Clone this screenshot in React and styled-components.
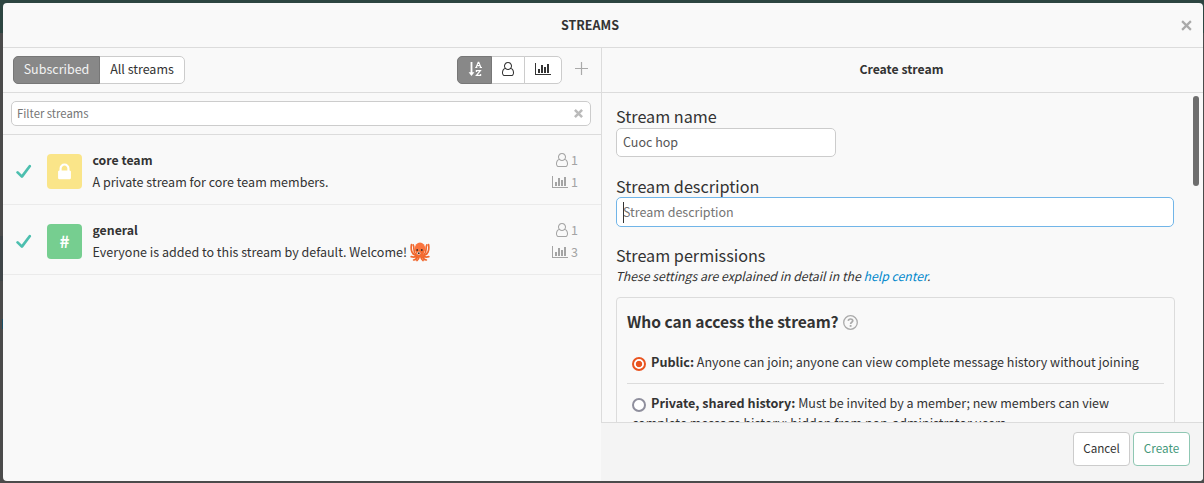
import React from 'react';
import styled, { createGlobalStyle } from 'styled-components';

const Global = createGlobalStyle`
  *, *::before, *::after { box-sizing: border-box; }
  html, body { margin: 0; height: 483px; overflow: hidden; }
  body {
    background:
      linear-gradient(#1c4f66, #1c4f66) 2px 319px / 1px 10px no-repeat,
      linear-gradient(#404649, #404649) 0 236px / 3px 45px no-repeat,
      linear-gradient(#2d4541 0 33px, #4b4b4b 33px);
    font-family: "Noto Sans CJK SC", "Open Sans", sans-serif;
    font-size: 12.53px;
    color: #333;
  }
  b { font-size: 12.6px; }
  input, button { font-family: inherit; }
  svg { display: block; flex: none; }
`;

const Modal = styled.div`
  margin: 3px 1px 2px 3px;
  height: 478px;
  background: #f9f9f9;
  border-radius: 4px;
  overflow: hidden;
  display: flex;
  flex-direction: column;
`;
const Header = styled.header`
  display: grid;
  grid-template-columns: 60px 1fr 60px;
  align-items: center;
  height: 45px;
  flex: none;
  border-bottom: 1px solid #dcdcdc;
`;
const Title = styled.h1`
  grid-column: 2;
  margin: 0;
  padding-right: 26px;
  text-align: center;
  font-size: 12.5px;
  line-height: 20px;
  font-weight: 700;
`;
const Close = styled.button`
  justify-self: end;
  margin-right: 11px;
  padding: 0;
  border: 0;
  background: none;
  color: #aaa;
`;
const Body = styled.div`
  display: flex;
  flex: 1;
  min-height: 0;
`;
const Left = styled.section`
  width: 599px;
  flex: none;
  border-right: 1px solid #dcdcdc;
`;
const Right = styled.section`
  flex: 1;
  min-width: 0;
  display: flex;
  flex-direction: column;
`;
const Toolbar = styled.div`
  display: flex;
  align-items: center;
  height: 45px;
  padding: 0 13px 1px 10px;
  border-bottom: 1px solid #dcdcdc;
`;
const Segments = styled.div`
  display: flex;
  height: 28px;
  margin-left: ${(p) => (p.$end ? 'auto' : 0)};
`;
const Segment = styled.button`
  width: ${(p) => p.$w}px;
  padding: 0 0 2px 0;
  display: flex;
  align-items: center;
  justify-content: center;
  font-size: 12.5px;
  line-height: 18px;
  color: ${(p) => (p.$on ? '#f2f2f2' : '#333')};
  background: ${(p) => (p.$on ? '#888' : '#fff')};
  border: 1px solid ${(p) => (p.$on ? '#777' : '#ccc')};
  & + & { border-left: 1px solid #ccc; margin-left: -1px; }
  &:first-child { border-radius: 5px 0 0 5px; position: relative; }
  &:last-child { border-radius: 0 5px 5px 0; }
`;
const Plus = styled.button`
  margin-left: 13px;
  padding: 0 0 2px;
  border: 0;
  background: none;
  color: #aaa;
`;
const Search = styled.div`
  height: 42px;
  padding: 8px 10px 8px 8px;
  border-bottom: 1px solid #dcdcdc;
`;
const SearchBox = styled.label`
  display: flex;
  align-items: center;
  height: 25px;
  padding: 0 7px 0 5px;
  border: 1px solid #ccc;
  border-radius: 5px;
  background: #fff;
  color: #bbb;
`;
const SearchInput = styled.input`
  flex: 1;
  padding: 0 0 2px;
  border: 0;
  outline: 0;
  height: 20px;
  font-size: 11.3px;
  &::placeholder { color: #757575; opacity: 1; }
`;
const Row = styled.div`
  display: flex;
  align-items: flex-start;
  height: 70px;
  padding: 0 23px 0 13px;
  border-bottom: 1px solid #ebebeb;
`;
const Check = styled.span`
  padding-top: 29px;
  width: 31px;
`;
const Badge = styled.span`
  display: flex;
  align-items: center;
  justify-content: center;
  width: 35px;
  height: 35px;
  margin-top: 19px;
  border-radius: 4px;
  background: ${(p) => p.$color};
  color: #fff;
  font-size: 17px;
  line-height: 33px;
  font-weight: 700;
`;
const Hash = styled.span`
  height: 35px;
`;
const Info = styled.div`
  padding: 14px 0 0 10.5px;
  flex: 1;
`;
const Name = styled.div`
  font-size: 12.3px;
  font-weight: 700;
  line-height: 22px;
  height: 22px;
`;
const Desc = styled.div`
  display: flex;
  align-items: center;
  gap: 3px;
  line-height: 22px;
  height: 22px;
`;
const Stats = styled.div`
  padding-top: 14px;
`;
const Stat = styled.div`
  display: flex;
  align-items: center;
  justify-content: flex-end;
  gap: ${(p) => p.$gap}px;
  height: 22px;
  line-height: 22px;
  color: #a4a4a4;
`;
const PanelTitle = styled.h2`
  margin: 0;
  height: 45px;
  flex: none;
  padding-right: 2px;
  line-height: 43px;
  font-size: 12.25px;
  font-weight: 700;
  text-align: center;
  border-bottom: 1px solid #dcdcdc;
`;
const Scroller = styled.div`
  display: flex;
  justify-content: space-between;
  flex: 1;
  min-height: 0;
  overflow: hidden;
  padding: 0 4px 0 14px;
`;
const Thumb = styled.div`
  width: 6px;
  height: 90px;
  margin-top: 3px;
  border-radius: 3px;
  background: #6e6e6e;
`;
const Form = styled.form`
  width: 559px;
  padding-top: 13px;
`;
const Label = styled.label`
  display: block;
  height: 22px;
  line-height: ${(p) => p.$lh || 20}px;
  font-size: 16.2px;
  margin-top: ${(p) => p.$top || 0}px;
`;
const Field = styled.input`
  display: block;
  width: ${(p) => p.$w}px;
  height: ${(p) => p.$h}px;
  padding: 0 6px 2px;
  border: 1px solid ${(p) => (p.$focus ? '#71b5e8' : '#ccc')};
  border-radius: 5px;
  background: #fff;
  outline: 0;
  color: #555;
  font-size: 12.5px;
  &::placeholder { color: #757575; opacity: 1; }
`;
const FocusWrap = styled.div`
  position: relative;
`;
const Caret = styled.i`
  position: absolute;
  left: 7px;
  top: 5px;
  width: 1px;
  height: 21px;
  background: #333;
`;
const Hint = styled.p`
  margin: 0 0 0 -0.5px;
  height: 20px;
  line-height: 18px;
  font-size: 12.25px;
  font-style: italic;
`;
const Link = styled.a`
  color: #08c;
`;
const Card = styled.fieldset`
  margin: 10px 0 0;
  padding: 14px 10px 0;
  height: 200px;
  border: 1px solid #dcdcdc;
  border-radius: 4px;
`;
const Question = styled.div`
  display: flex;
  align-items: center;
  gap: 4px;
  height: 20px;
  line-height: 20px;
  font-size: 15.6px;
  font-weight: 700;
`;
const QuestionText = styled.span`
  padding-bottom: 2px;
`;
const Option = styled.label`
  display: block;
  padding: ${(p) => p.$pad}px 25px 0 5px;
  border-top: 1px solid ${(p) => (p.$line ? '#dcdcdc' : 'transparent')};
  line-height: 20px;
  height: ${(p) => p.$h}px;
`;
const Radio = styled.span`
  display: inline-block;
  width: 14px;
  height: 14px;
  margin-right: 5px;
  vertical-align: -4px;
  border-radius: 50%;
  border: 2px solid ${(p) => (p.$on ? '#e95420' : '#8f8f9d')};
  background: ${(p) => (p.$on ? 'radial-gradient(circle, #e95420 2.8px, #fff 3.6px)' : '#fff')};
`;
const Footer = styled.footer`
  display: flex;
  justify-content: flex-end;
  gap: 3px;
  height: 59px;
  flex: none;
  padding: 9px 13px 0 0;
  margin-left: -1px;
  background: #f4f4f4;
  border-top: 1px solid #dcdcdc;
`;
const Button = styled.button`
  width: 57px;
  height: 34px;
  padding: 0 0 2px;
  border-radius: 4px;
  background: #fff;
  border: 1px solid ${(p) => (p.$primary ? '#8fc7b3' : '#ccc')};
  color: ${(p) => (p.$primary ? '#44987a' : '#333')};
  font-size: 11.7px;
  line-height: 20px;
`;

const UserIcon = ({ h = 14 }) => (
  <svg width={(h * 6) / 7} height={h} viewBox="0 0 1536 1792" fill="currentColor">
    <path d="M1201 784q47 14 89.5 38t89 73 79.5 115.5 55 172 22 236.5q0 154-100 263.5T1195 1792H341q-141 0-241-109.5T0 1419q0-131 22-236.5t55-172T156.5 895t89-73 89.5-38q-79-125-79-272 0-104 40.5-198.5t109.5-163.5T569.5 40.5 768 0t198.5 40.5T1130 150t109.5 163.5T1280 512q0 147-79 272zM768 128q-159 0-271.5 112.5T384 512t112.5 271.5T768 896t271.5-112.5T1152 512t-112.5-271.5T768 128zm427 1536q88 0 150.5-71.5T1408 1419q0-239-78.5-377T1104 897q-145 127-336 127T432 897q-147 7-225.5 145T128 1419q0 102 62.5 173.5T341 1664h854z" />
  </svg>
);
const ChartIcon = () => (
  <svg width="16" height="14" viewBox="0 0 2048 1792" fill="currentColor">
    <path d="M640 896v512H384V896h256zm384-512v1024H768V384h256zm1024 1152v128H0V128h128v1408h1920zm-640-896v768h-256V640h256zm384-384v1152h-256V256h256z" />
  </svg>
);
const SortIcon = () => (
  <svg width="14" height="16" viewBox="0 0 14 16" fill="none" stroke="#fff">
    <path d="M3.5 1v12" strokeWidth="1.8" />
    <path d="M.6 11.2h5.8L3.5 15z" fill="#fff" stroke="none" />
    <path d="M8.2 6.2 10.2 1.2h.6l2 5M9 4.6h3M7.2 6.5h2.2M11.6 6.5H14" strokeWidth="1.1" />
    <path d="M8.4 11V9.6h4L8.4 14.4h4.2V13" strokeWidth="1.2" />
  </svg>
);
const TimesIcon = ({ size, w }) => (
  <svg width={size} height={size} viewBox="0 0 10 10" stroke="currentColor" strokeWidth={w}>
    <path d="M1 1l8 8M9 1L1 9" />
  </svg>
);
const PlusIcon = () => (
  <svg width="13" height="13" viewBox="0 0 13 13" stroke="currentColor" strokeWidth="1.2">
    <path d="M6.5 0v13M0 6.5h13" />
  </svg>
);
const CheckIcon = () => (
  <svg width="16" height="15" viewBox="0 0 16 15" fill="none" stroke="#4dbfaf" strokeWidth="2.7" strokeLinecap="round" strokeLinejoin="round">
    <path d="M1.6 8.4 5.9 12.6 13.7 2.2" />
  </svg>
);
const LockIcon = () => (
  <svg width="13" height="20" viewBox="0 0 1152 1792" fill="currentColor">
    <path d="M320 768h512V576q0-106-75-181t-181-75-181 75-75 181v192zm832 96v576q0 40-28 68t-68 28H96q-40 0-68-28t-28-68V864q0-40 28-68t68-28h32V576q0-184 132-316T576 128t316 132 132 316v192h32q40 0 68 28t28 68z" />
  </svg>
);
const HelpIcon = () => (
  <svg width="15" height="15" viewBox="0 0 15 15" fill="none" stroke="#aaa">
    <circle cx="7.5" cy="7.5" r="6.8" strokeWidth="1.3" />
    <path d="M5.3 5.9C5.4 3.4 9.8 3.4 9.8 5.8c0 1.5-2.2 1.5-2.2 3.2" strokeWidth="1.7" />
    <path d="M7.6 10v1.8" strokeWidth="1.8" />
  </svg>
);
const Octopus = () => (
  <svg width="20" height="20" viewBox="0 0 20 20" fill="none">
    <g stroke="#f0672d" strokeWidth="1.7" strokeLinecap="round">
      <path d="M6.5 13.5C2 13 .4 8 1.500 2.500M5.500 12C3 9.500 4.600 6 3.300 3M13.500 13.500c4.500-.5 6.100-5.500 5-11M14.500 12c2.500-2.500.9-6 2.200-9" />
      <path d="M7 13c-1 2-3 2.500-5.800 1.600M7.500 14c-.5 3-2 3.800-3.900 4M9 14c.2 3-1 4-2 4.600M13 13c1 2 3 2.500 5.800 1.600M12.500 14c.5 3 2 3.800 3.900 4M11 14c-.2 3 1 4 2 4.600" />
    </g>
    <ellipse cx="10" cy="6.500" rx="5.200" ry="5.900" fill="#fa743e" />
    <path d="M5.500 8h9l-1.500 7.500H7z" fill="#f46b30" />
    <circle cx="7.200" cy="8" r=".95" fill="#40302c" />
    <circle cx="11.800" cy="8" r=".95" fill="#40302c" />
    <circle cx="8.800" cy="11.200" r="1.600" fill="#e8d8d0" />
    <circle cx="8.800" cy="11.200" r=".9" fill="#40302c" />
  </svg>
);

const streams = [
  { name: 'core team', desc: 'A private stream for core team members.', color: '#fae589', icon: <LockIcon />, users: 1, traffic: 1 },
  { name: 'general', desc: 'Everyone is added to this stream by default. Welcome!', color: '#76ce90', icon: <Hash>#</Hash>, users: 1, traffic: 3, emoji: true },
];

export default function App() {
  return (
    <>
      <Global />
      <Modal>
        <Header>
          <Title>STREAMS</Title>
          <Close aria-label="Close"><TimesIcon size={11} w={2} /></Close>
        </Header>
        <Body>
          <Left>
            <Toolbar>
              <Segments>
                <Segment $w={87} $on>Subscribed</Segment>
                <Segment $w={86}>All streams</Segment>
              </Segments>
              <Segments $end>
                <Segment $w={35} $on><SortIcon /></Segment>
                <Segment $w={34}><UserIcon /></Segment>
                <Segment $w={38}><ChartIcon /></Segment>
              </Segments>
              <Plus aria-label="Create stream"><PlusIcon /></Plus>
            </Toolbar>
            <Search>
              <SearchBox>
                <SearchInput placeholder="Filter streams" />
                <TimesIcon size={9} w={2.8} />
              </SearchBox>
            </Search>
            {streams.map((s) => (
              <Row key={s.name}>
                <Check><CheckIcon /></Check>
                <Badge $color={s.color}>{s.icon}</Badge>
                <Info>
                  <Name>{s.name}</Name>
                  <Desc><span>{s.desc}</span>{s.emoji && <Octopus />}</Desc>
                </Info>
                <Stats>
                  <Stat $gap={3}><UserIcon />{s.users}</Stat>
                  <Stat $gap={3}><ChartIcon />{s.traffic}</Stat>
                </Stats>
              </Row>
            ))}
          </Left>
          <Right>
            <PanelTitle>Create stream</PanelTitle>
            <Scroller>
              <Form>
                <Label>Stream name</Label>
                <Field $w={220} $h={29} defaultValue="Cuoc hop" />
                <Label $top={18} $lh={22}>Stream description</Label>
                <FocusWrap>
                  <Field $w={558} $h={30} $focus placeholder="Stream description" />
                  <Caret />
                </FocusWrap>
                <Label $top={18}>Stream permissions</Label>
                <Hint>These settings are explained in detail in the <Link>help center</Link>.</Hint>
                <Card>
                  <Question><QuestionText>Who can access the stream?</QuestionText><HelpIcon /></Question>
                  <Option $pad={19} $h={51}>
                    <Radio $on /><b>Public:</b> Anyone can join; anyone can view complete message history without joining
                  </Option>
                  <Option $line $pad={9} $h={60}>
                    <Radio /><b>Private, shared history:</b> Must be invited by a member; new members can view complete message history; hidden from non-administrator users
                  </Option>
                </Card>
              </Form>
              <Thumb />
            </Scroller>
            <Footer>
              <Button>Cancel</Button>
              <Button $primary>Create</Button>
            </Footer>
          </Right>
        </Body>
      </Modal>
    </>
  );
}
